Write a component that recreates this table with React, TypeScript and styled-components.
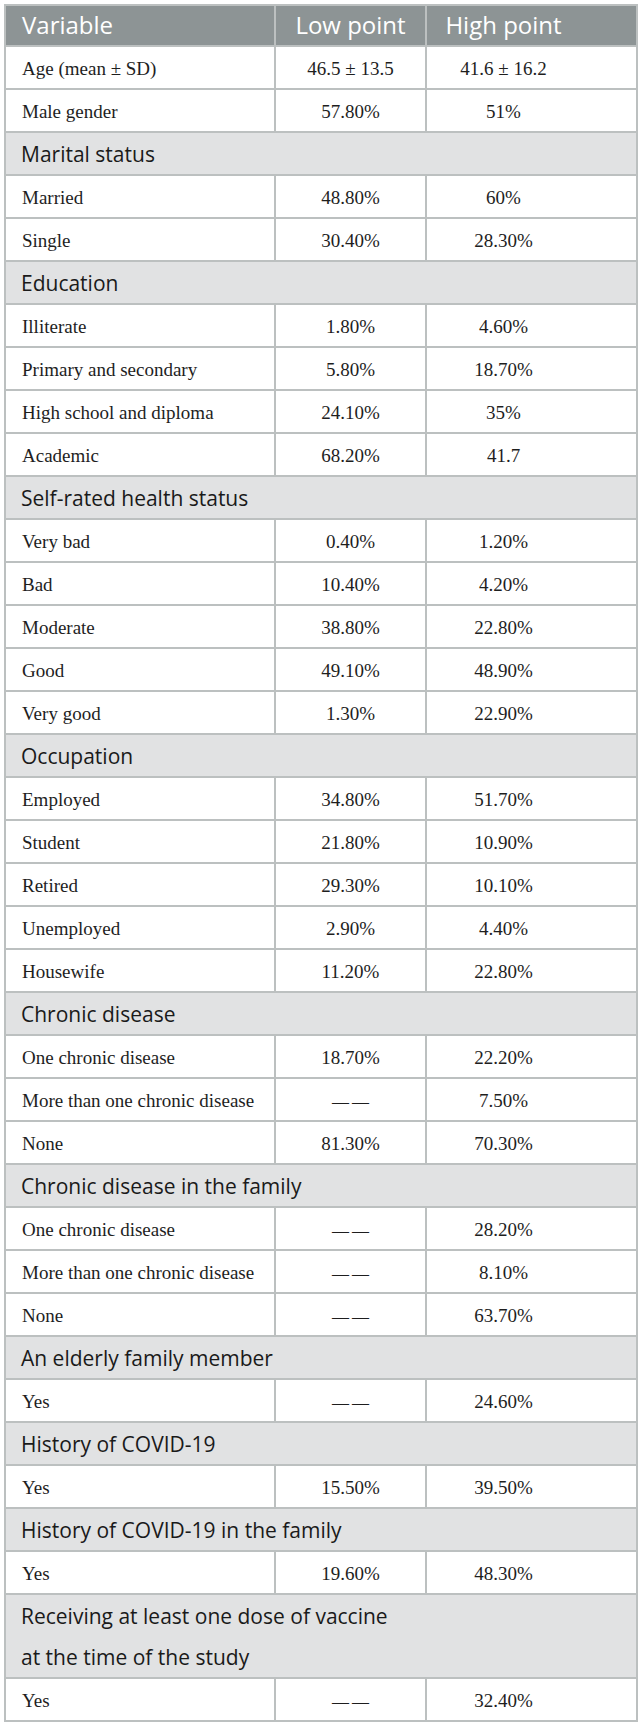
import React from "react";
import styled, { createGlobalStyle } from "styled-components";

const GlobalStyle = createGlobalStyle`
  html, body {
    margin: 0;
    padding: 0;
    background: #ffffff;
  }
`;

const Page = styled.div`
  padding: 4px;
  width: 634px;
`;

const Table = styled.table`
  width: 634px;
  border-collapse: separate;
  border-spacing: 0;
  table-layout: fixed;
  border-top: 2px solid #bcc0c0;
  border-left: 2px solid #bcc0c0;
`;

const Col = styled.col<{ $w: number }>`
  width: ${(p) => p.$w}px;
`;

const HeadCell = styled.th<{ $align?: "left" | "center"; $padRight?: number }>`
  box-sizing: border-box;
  background: #8d9495;
  color: #ffffff;
  font-family: "Open Sans", "Noto Sans", sans-serif;
  font-weight: 400;
  font-size: 24px;
  line-height: 37px;
  padding: 0 ${(p) => p.$padRight ?? 0}px 2px ${(p) => (p.$align === "left" ? 16 : 0)}px;
  text-align: ${(p) => p.$align ?? "center"};
  white-space: nowrap;
  border-right: 2px solid #bcc0c0;
  border-bottom: 2px solid #bcc0c0;
`;

const SectionCell = styled.td<{ $tall?: boolean }>`
  box-sizing: border-box;
  background: #e1e2e3;
  color: #1a1a1a;
  font-family: "Open Sans", "Noto Sans", sans-serif;
  font-size: 21px;
  line-height: ${(p) => (p.$tall ? "40.5px" : "40px")};
  padding: 1px 0 0 15px;
  text-align: left;
  border-right: 2px solid #bcc0c0;
  border-bottom: 2px solid #bcc0c0;
`;

const DataCell = styled.td<{ $align?: "left" | "center"; $padRight?: number }>`
  box-sizing: border-box;
  height: 43px;
  background: #ffffff;
  color: #1e1e1e;
  font-family: "Liberation Serif", "Times New Roman", serif;
  font-size: 19px;
  line-height: 38px;
  padding: 3px ${(p) => p.$padRight ?? 0}px 0 ${(p) => (p.$align === "left" ? 16 : 0)}px;
  text-align: ${(p) => p.$align ?? "center"};
  white-space: nowrap;
  border-right: 2px solid #bcc0c0;
  border-bottom: 2px solid #bcc0c0;
`;

const Dash = styled.span`
  font-size: 17px;
  line-height: 1;
  letter-spacing: 3px;
  margin-right: -3px;
`;

type Row = [string, string, string];
type Block =
  | { kind: "rows"; rows: Row[] }
  | { kind: "section"; title: React.ReactNode; tall?: boolean; rows: Row[] };

const DASH = "——";

const blocks: Block[] = [
  {
    kind: "rows",
    rows: [
      ["Age (mean ± SD)", "46.5 ± 13.5", "41.6 ± 16.2"],
      ["Male gender", "57.80%", "51%"],
    ],
  },
  {
    kind: "section",
    title: "Marital status",
    rows: [
      ["Married", "48.80%", "60%"],
      ["Single", "30.40%", "28.30%"],
    ],
  },
  {
    kind: "section",
    title: "Education",
    rows: [
      ["Illiterate", "1.80%", "4.60%"],
      ["Primary and secondary", "5.80%", "18.70%"],
      ["High school and diploma", "24.10%", "35%"],
      ["Academic", "68.20%", "41.7"],
    ],
  },
  {
    kind: "section",
    title: "Self-rated health status",
    rows: [
      ["Very bad", "0.40%", "1.20%"],
      ["Bad", "10.40%", "4.20%"],
      ["Moderate", "38.80%", "22.80%"],
      ["Good", "49.10%", "48.90%"],
      ["Very good", "1.30%", "22.90%"],
    ],
  },
  {
    kind: "section",
    title: "Occupation",
    rows: [
      ["Employed", "34.80%", "51.70%"],
      ["Student", "21.80%", "10.90%"],
      ["Retired", "29.30%", "10.10%"],
      ["Unemployed", "2.90%", "4.40%"],
      ["Housewife", "11.20%", "22.80%"],
    ],
  },
  {
    kind: "section",
    title: "Chronic disease",
    rows: [
      ["One chronic disease", "18.70%", "22.20%"],
      ["More than one chronic disease", DASH, "7.50%"],
      ["None", "81.30%", "70.30%"],
    ],
  },
  {
    kind: "section",
    title: "Chronic disease in the family",
    rows: [
      ["One chronic disease", DASH, "28.20%"],
      ["More than one chronic disease", DASH, "8.10%"],
      ["None", DASH, "63.70%"],
    ],
  },
  {
    kind: "section",
    title: "An elderly family member",
    rows: [["Yes", DASH, "24.60%"]],
  },
  {
    kind: "section",
    title: "History of COVID-19",
    rows: [["Yes", "15.50%", "39.50%"]],
  },
  {
    kind: "section",
    title: "History of COVID-19 in the family",
    rows: [["Yes", "19.60%", "48.30%"]],
  },
  {
    kind: "section",
    title: (
      <>
        Receiving at least one dose of vaccine
        <br />
        at the time of the study
      </>
    ),
    tall: true,
    rows: [["Yes", DASH, "32.40%"]],
  },
];

const Value: React.FC<{ v: string }> = ({ v }) =>
  v === DASH ? <Dash>{v}</Dash> : <>{v}</>;

const DataRow: React.FC<{ row: Row }> = ({ row }) => (
  <tr>
    <DataCell $align="left">{row[0]}</DataCell>
    <DataCell>
      <Value v={row[1]} />
    </DataCell>
    <DataCell $padRight={56}>
      <Value v={row[2]} />
    </DataCell>
  </tr>
);

export default function App() {
  return (
    <>
      <GlobalStyle />
      <Page>
        <Table>
          <colgroup>
            <Col $w={270} />
            <Col $w={151} />
            <Col $w={211} />
          </colgroup>
          <thead>
            <tr>
              <HeadCell $align="left">Variable</HeadCell>
              <HeadCell>Low point</HeadCell>
              <HeadCell $padRight={56}>High point</HeadCell>
            </tr>
          </thead>
          <tbody>
            {blocks.map((b, i) => (
              <React.Fragment key={i}>
                {b.kind === "section" && (
                  <tr>
                    <SectionCell colSpan={3} $tall={b.tall}>
                      {b.title}
                    </SectionCell>
                  </tr>
                )}
                {b.rows.map((r, j) => (
                  <DataRow key={j} row={r} />
                ))}
              </React.Fragment>
            ))}
          </tbody>
        </Table>
      </Page>
    </>
  );
}
